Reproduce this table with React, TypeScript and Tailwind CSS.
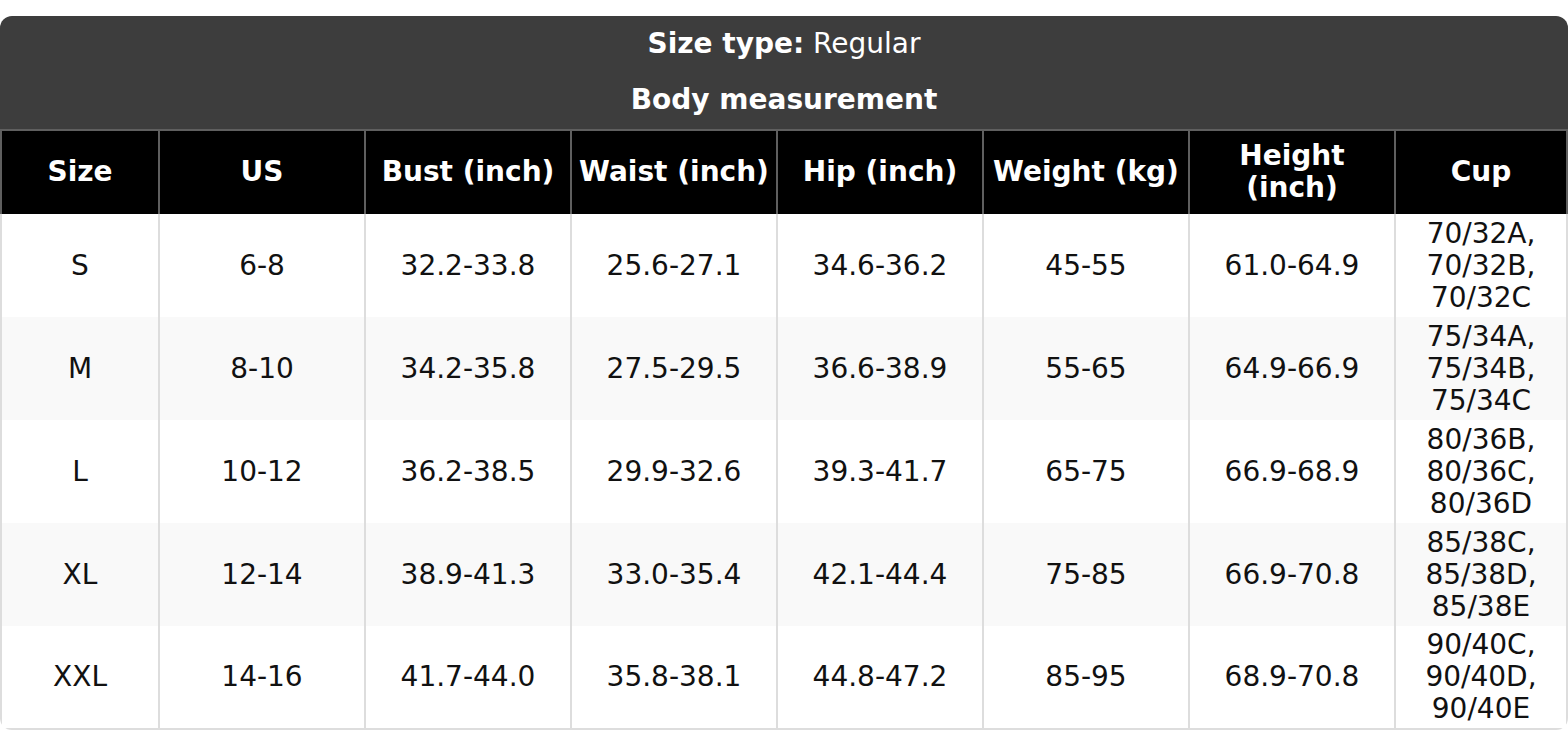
import React from "react";

const rows = [
  ["S", "6-8", "32.2-33.8", "25.6-27.1", "34.6-36.2", "45-55", "61.0-64.9", ["70/32A,", "70/32B,", "70/32C"]],
  ["M", "8-10", "34.2-35.8", "27.5-29.5", "36.6-38.9", "55-65", "64.9-66.9", ["75/34A,", "75/34B,", "75/34C"]],
  ["L", "10-12", "36.2-38.5", "29.9-32.6", "39.3-41.7", "65-75", "66.9-68.9", ["80/36B,", "80/36C,", "80/36D"]],
  ["XL", "12-14", "38.9-41.3", "33.0-35.4", "42.1-44.4", "75-85", "66.9-70.8", ["85/38C,", "85/38D,", "85/38E"]],
  ["XXL", "14-16", "41.7-44.0", "35.8-38.1", "44.8-47.2", "85-95", "68.9-70.8", ["90/40C,", "90/40D,", "90/40E"]],
] as const;

const heads = ["Size", "US", "Bust (inch)", "Waist (inch)", "Hip (inch)", "Weight (kg)", "Height (inch)", "Cup"];

export default function App() {
  return (
    <div className="bg-white pt-[16px] font-['DejaVu_Sans',sans-serif]">
      <div className="rounded-[12px] overflow-hidden">
        <div className="bg-[#3d3d3d] text-white text-center text-[28px] leading-[32px] pt-[12px] pb-[13px] flex flex-col gap-[24px]">
          <div>
            <span className="font-bold">Size type:</span> Regular
          </div>
          <div className="font-bold">Body measurement</div>
        </div>
        <table className="w-full table-fixed border-separate border-spacing-0 text-[28px] leading-[32px]">
          <colgroup>
            <col className="w-[160px]" />
            <col className="w-[206px]" />
            <col className="w-[206px]" />
            <col className="w-[206px]" />
            <col className="w-[206px]" />
            <col className="w-[206px]" />
            <col className="w-[206px]" />
            <col className="w-[172px]" />
          </colgroup>
          <thead>
            <tr className="h-[85px]">
              {heads.map((h, i) => (
                <th
                  key={h}
                  className={
                    "bg-black text-white font-bold px-1 pb-[2px] border-t-2 border-r-2 border-[#5f5f5f] " +
                    (i === 0 ? "border-l-2" : "")
                  }
                >
                  {h === "Height (inch)" ? (
                    <>
                      Height
                      <br />
                      (inch)
                    </>
                  ) : (
                    h
                  )}
                </th>
              ))}
            </tr>
          </thead>
          <tbody>
            {rows.map((r, ri) => (
              <tr key={ri} className={"h-[103px] " + (ri % 2 === 1 ? "bg-[#f9f9f9]" : "bg-white")}>
                {r.map((c, ci) => (
                  <td
                    key={ci}
                    className={
                      "text-center text-[#111] px-1 py-[3px] border-r-2 border-[#dddddd] " +
                      (ci === 0 ? "border-l-2 " : "") +
                      (ri === rows.length - 1 ? "border-b-2" : "")
                    }
                  >
                    {Array.isArray(c)
                      ? (c as readonly string[]).map((l) => <div key={l}>{l}</div>)
                      : (c as string)}
                  </td>
                ))}
              </tr>
            ))}
          </tbody>
        </table>
      </div>
    </div>
  );
}
